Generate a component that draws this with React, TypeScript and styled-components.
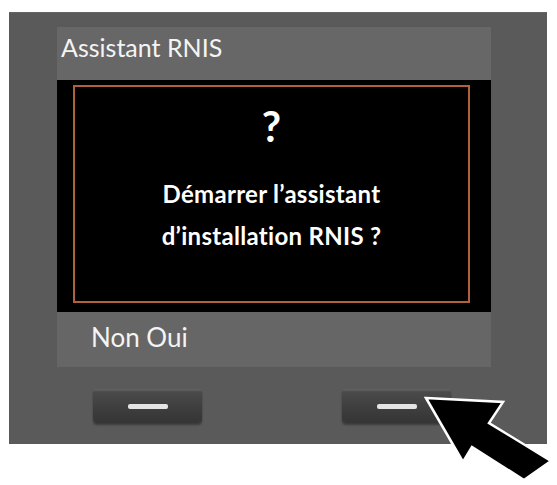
import React from 'react'
import styled, { createGlobalStyle } from 'styled-components'

const GlobalStyle = createGlobalStyle`
  html, body {
    margin: 0;
    padding: 0;
    background: #ffffff;
  }
  body {
    font-family: Lato, 'Open Sans', 'Noto Sans', sans-serif;
  }
`

const Stage = styled.div`
  position: relative;
  width: 557px;
  height: 485px;
  padding: 12px 0 0 9px;
  box-sizing: border-box;
  overflow: hidden;
`

const Handset = styled.div`
  width: 538px;
  height: 432px;
  padding: 15px 0 0 48px;
  box-sizing: border-box;
  background: #5a5a5a;
  box-shadow: inset 0 1px 0 #646464;
  display: flex;
  flex-direction: column;
`

const Screen = styled.div`
  width: 434px;
  display: flex;
  flex-direction: column;
`

const TitleBar = styled.div`
  height: 53px;
  box-sizing: border-box;
  padding: 5px 4px;
  background: #676767;
  color: #f4f4f4;
  font-size: 25px;
  line-height: 30px;
`

const Display = styled.div`
  height: 232px;
  box-sizing: border-box;
  padding: 5px 21px 9px 16px;
  background: #000000;
`

const Dialog = styled.div`
  height: 100%;
  box-sizing: border-box;
  border: 2px solid #b0623b;
  padding-top: 18px;
  display: flex;
  flex-direction: column;
  align-items: center;
  color: #ffffff;
  font-weight: 700;
`

const Question = styled.div`
  font-size: 42px;
  line-height: 42px;
`

const Prompt = styled.div`
  margin-top: 26px;
  font-size: 24px;
  line-height: 42px;
  letter-spacing: 0.3px;
  text-align: center;
`

const SoftkeyBar = styled.div`
  height: 55px;
  box-sizing: border-box;
  padding: 10px 34px;
  background: #666666;
  color: #f4f4f4;
  font-size: 26px;
  line-height: 31px;
`

const KeyRow = styled.div`
  display: flex;
  gap: 140px;
  margin: 22px 0 0 36px;
`

const Key = styled.div`
  width: 109px;
  height: 34px;
  border-radius: 4px;
  background: linear-gradient(180deg, #666666 0, #4a4a4a 3px, #3d3d3d 60%, #353535 100%);
  box-shadow: 0 2px 2px rgba(0, 0, 0, 0.35);
  display: flex;
  align-items: center;
  justify-content: center;
`

const Dash = styled.span`
  width: 40px;
  height: 5px;
  border-radius: 2px;
  background: #e4e4e4;
`

const Pointer = styled.svg`
  position: absolute;
  left: 416px;
  top: 390px;
  pointer-events: none;
`

const Arrow = () => (
  <Pointer width="141" height="95" viewBox="416 390 141 95">
    <polygon
      points="426,398 503,402 489,423 551,461 524,480 472,447 463,462"
      fill="#000000"
      stroke="#ffffff"
      strokeWidth="2.5"
      strokeLinejoin="miter"
    />
  </Pointer>
)

export default function App() {
  return (
    <>
      <GlobalStyle />
      <Stage>
        <Handset>
          <Screen>
            <TitleBar>Assistant RNIS</TitleBar>
            <Display>
              <Dialog>
                <Question>?</Question>
                <Prompt>
                  Démarrer l’assistant
                  <br />
                  d’installation RNIS ?
                </Prompt>
              </Dialog>
            </Display>
            <SoftkeyBar>Non Oui</SoftkeyBar>
          </Screen>
          <KeyRow>
            <Key>
              <Dash />
            </Key>
            <Key>
              <Dash />
            </Key>
          </KeyRow>
        </Handset>
        <Arrow />
      </Stage>
    </>
  )
}
